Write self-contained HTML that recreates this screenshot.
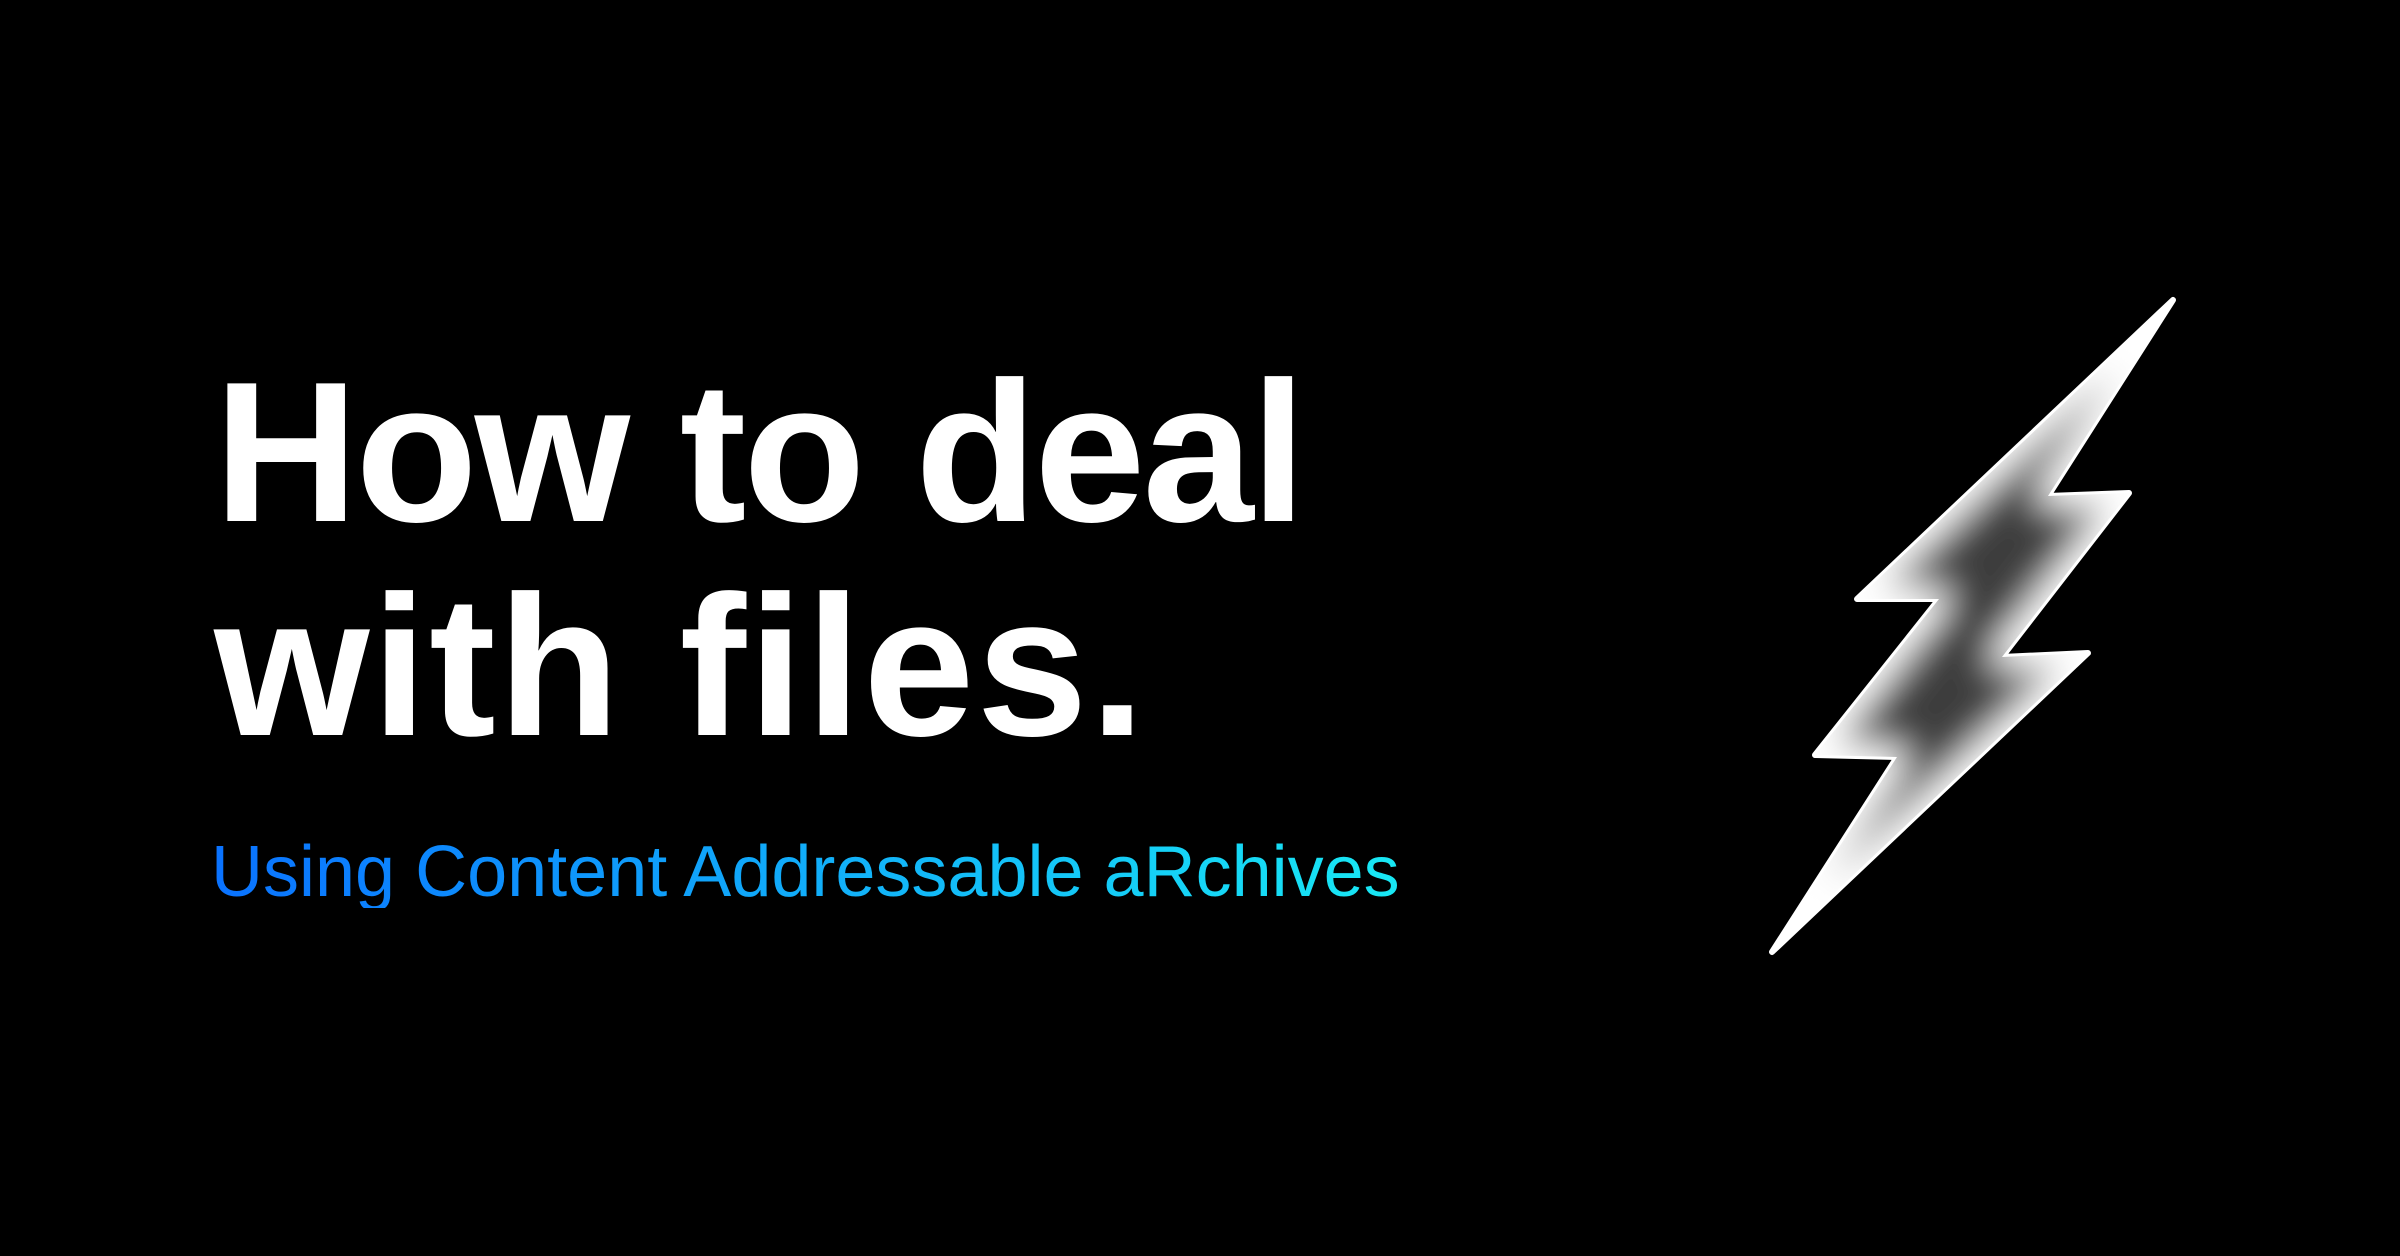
<!DOCTYPE html>
<html><head><meta charset="utf-8"><style>
html,body{margin:0;padding:0;background:#000;width:2400px;height:1256px;overflow:hidden}
.t{position:absolute;left:214px;font-family:"Liberation Sans",sans-serif;font-weight:bold;color:#fff;font-size:200px;line-height:1;white-space:nowrap}
.s{position:absolute;left:211px;top:836px;font-family:"Liberation Sans",sans-serif;font-size:72px;white-space:nowrap;background:linear-gradient(90deg,#0a72ff,#18e8f4);-webkit-background-clip:text;background-clip:text;color:transparent;line-height:1}
svg{position:absolute;left:0;top:0}
</style></head><body>
<div class="t" style="top:353px;letter-spacing:-3px">How to deal</div>
<div class="t" style="top:567px;letter-spacing:2px">with files.</div>
<div class="s">Using Content Addressable aRchives</div>
<svg width="2400" height="1256" viewBox="0 0 2400 1256">
<defs>
<clipPath id="c"><polygon points="2173,300 1857,599 1939,599 1815,755 1897,757 1772,952 2088,653 2002,657 2129,493 2048,496"/></clipPath>
<filter id="b" x="-20%" y="-20%" width="140%" height="140%"><feGaussianBlur stdDeviation="18"/></filter>
</defs>
<polygon points="2173,300 1857,599 1939,599 1815,755 1897,757 1772,952 2088,653 2002,657 2129,493 2048,496" fill="#fff" stroke="#fff" stroke-width="6" stroke-linejoin="round"/>
<g clip-path="url(#c)">
<polygon points="2173,300 1857,599 1939,599 1815,755 1897,757 1772,952 2088,653 2002,657 2129,493 2048,496" fill="#3c3c3c" stroke="#fff" stroke-width="22" stroke-linejoin="round" filter="url(#b)"/>
</g>
</svg>
</body></html>
